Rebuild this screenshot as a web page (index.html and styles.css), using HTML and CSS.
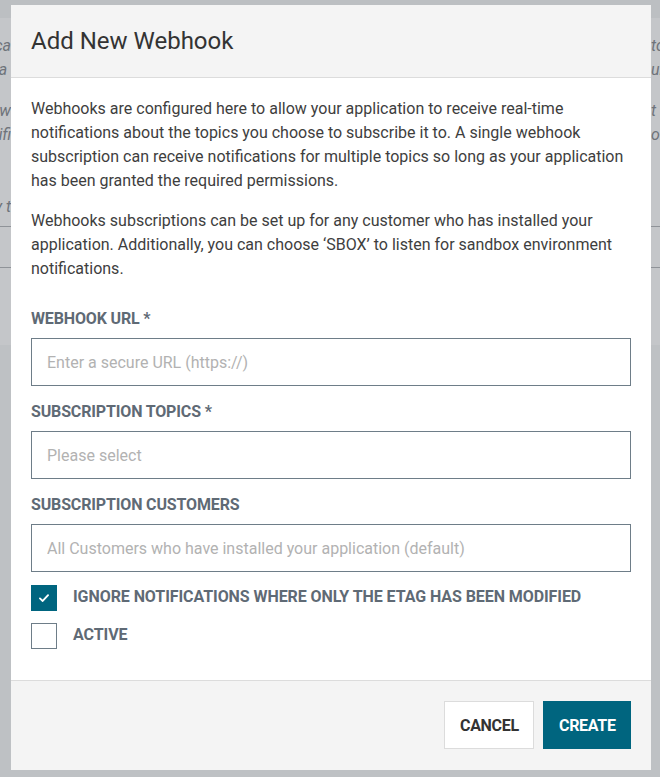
FILE: index.html
```html
<!DOCTYPE html>
<html lang="en">
<head>
<meta charset="utf-8">
<title>Add New Webhook</title>
<link rel="stylesheet" href="styles.css">
</head>
<body>
<div class="page">
  <div class="page-top"></div>
  <div class="page-content">
    <div class="bg-line l1"><span class="frag-left"><i>ca</i></span><span class="frag-right"><i>to</i></span></div>
    <div class="bg-line l2"><span class="frag-left"><i>a&nbsp;</i></span><span class="frag-right"><i>ur</i></span></div>
    <div class="bg-line l3"><span class="frag-left"><i>w</i></span><span class="frag-right"><i>t t</i></span></div>
    <div class="bg-line l4"><span class="frag-left"><i>ifi</i></span><span class="frag-right"><i>oi</i></span></div>
    <div class="bg-line l5"><span class="frag-left"><i>y t</i></span><span class="frag-right"><i></i></span></div>
    <div class="bg-rule r1"></div>
    <div class="bg-rule r2"></div>
  </div>
</div>

<div class="modal" role="dialog" aria-labelledby="modal-title">
  <header class="modal-header">
    <h1 id="modal-title" class="modal-title">Add New Webhook</h1>
  </header>
  <div class="modal-body">
    <p class="intro">Webhooks are configured here to allow your application to receive real-time notifications about the topics you choose to subscribe it to. A single webhook subscription can receive notifications for multiple topics so long as your application has been granted the required permissions.</p>
    <p class="intro">Webhooks subscriptions can be set up for any customer who has installed your application. Additionally, you can choose ‘SBOX’ to listen for sandbox environment notifications.</p>

    <div class="form">
      <div class="field">
        <label class="field-label" for="url">WEBHOOK URL *</label>
        <input class="field-input" id="url" type="text" placeholder="Enter a secure URL (https://)">
      </div>
      <div class="field">
        <label class="field-label" for="topics">SUBSCRIPTION TOPICS *</label>
        <input class="field-input" id="topics" type="text" placeholder="Please select">
      </div>
      <div class="field">
        <label class="field-label" for="customers">SUBSCRIPTION CUSTOMERS</label>
        <input class="field-input" id="customers" type="text" placeholder="All Customers who have installed your application (default)">
      </div>

      <div class="check-row">
        <span class="check-box checked">
          <svg viewBox="0 0 26 26" width="26" height="26" aria-hidden="true"><path d="M8.6 13.4 L11.6 16.2 L17.4 10" fill="none" stroke="#fff" stroke-width="2" stroke-linecap="round" stroke-linejoin="round"/></svg>
        </span>
        <span class="check-label">IGNORE NOTIFICATIONS WHERE ONLY THE ETAG HAS BEEN MODIFIED</span>
      </div>
      <div class="check-row">
        <span class="check-box"></span>
        <span class="check-label">ACTIVE</span>
      </div>
    </div>
  </div>
  <footer class="modal-footer">
    <button class="btn btn-cancel" type="button">CANCEL</button>
    <button class="btn btn-create" type="button">CREATE</button>
  </footer>
</div>
</body>
</html>
```

FILE: styles.css
```css
* { box-sizing: border-box; }

html, body {
  margin: 0;
  padding: 0;
  height: 100%;
}

body {
  background: #bec1c4;
  font-family: Roboto, "Liberation Sans", Arial, sans-serif;
  overflow: hidden;
}

/* background page (dimmed behind backdrop) */
.page {
  width: 100%;
}

.page-top {
  height: 18px;
  background: #bcbfc2;
}

.page-content {
  height: 327px;
  background: #c4c6c9;
  padding-top: 16px;
  overflow: hidden;
}

.bg-line {
  display: flex;
  justify-content: space-between;
  height: 24px;
  font-size: 16px;
  line-height: 24px;
  color: #6e737a;
  white-space: nowrap;
}

.bg-line i { font-style: italic; }

.frag-left {
  width: 11px;
  overflow: hidden;
  display: flex;
  justify-content: flex-end;
}

.frag-right {
  width: 9px;
  overflow: hidden;
  display: flex;
  justify-content: flex-start;
}

.bg-line.l3 { margin-top: 17px; }
.bg-line.l5 { margin-top: 48px; }

.bg-rule {
  height: 1px;
  background: #8f9398;
}
.bg-rule.r1 { margin-top: 7px; }
.bg-rule.r2 { margin-top: 40px; }

/* modal */
.modal {
  position: fixed;
  left: 11px;
  top: 5px;
  width: 640px;
  height: 765px;
  background: #fff;
  display: flex;
  flex-direction: column;
}

.modal-header {
  background: #f4f4f4;
  border-bottom: 1px solid #dcdcdc;
  height: 73px;
  padding: 0 20px;
  display: flex;
  align-items: center;
}

.modal-title {
  margin: 0;
  font-size: 24px;
  font-weight: 400;
  color: #333;
  line-height: 32px;
  padding-bottom: 1px;
}

.modal-body {
  flex: 1;
  padding: 19px 20px 0;
}

.intro {
  margin: 0 0 16px;
  font-size: 16px;
  line-height: 24px;
  color: #3e3e3e;
}

.form {
  padding-top: 11px;
}

.field {
  margin-bottom: 15px;
}

.field-label {
  display: block;
  font-size: 16px;
  font-weight: 700;
  line-height: 22px;
  color: #5f6a75;
  margin-bottom: 8px;
  letter-spacing: -0.15px;
}

.field-input {
  display: block;
  width: 100%;
  height: 48px;
  border: 1px solid #6e7d88;
  border-radius: 0;
  padding: 0 15px;
  font-family: inherit;
  font-size: 16px;
  color: #333;
  background: #fff;
  outline: none;
}

.field-input::placeholder {
  color: #b2b2b2;
  opacity: 1;
}

.check-row {
  display: flex;
  align-items: center;
  gap: 16px;
  margin-top: -2px;
  margin-bottom: 14px;
}

.check-box {
  flex: none;
  width: 26px;
  height: 26px;
  border: 1px solid #6e7d88;
  background: #fff;
  display: flex;
  align-items: center;
  justify-content: center;
}

.check-box.checked {
  background: #00657f;
  border-color: #00657f;
}

.check-label {
  font-size: 16px;
  font-weight: 700;
  color: #5f6a75;
  line-height: 20px;
  letter-spacing: -0.07px;
  padding-bottom: 2px;
}

.modal-footer {
  height: 90px;
  background: #f4f4f4;
  border-top: 1px solid #dcdcdc;
  display: flex;
  justify-content: flex-end;
  align-items: flex-start;
  padding: 20px 20px 0;
  gap: 9px;
}

.btn {
  height: 48px;
  padding: 0 15px;
  font-family: inherit;
  font-size: 16px;
  font-weight: 700;
  letter-spacing: -0.3px;
  cursor: pointer;
  border-radius: 0;
}

.btn-cancel {
  background: #fff;
  border: 1px solid #dcdcdc;
  color: #333;
  width: 90px;
}

.btn-create {
  background: #00657f;
  border: 1px solid #00657f;
  color: #fff;
  width: 88px;
}
```
